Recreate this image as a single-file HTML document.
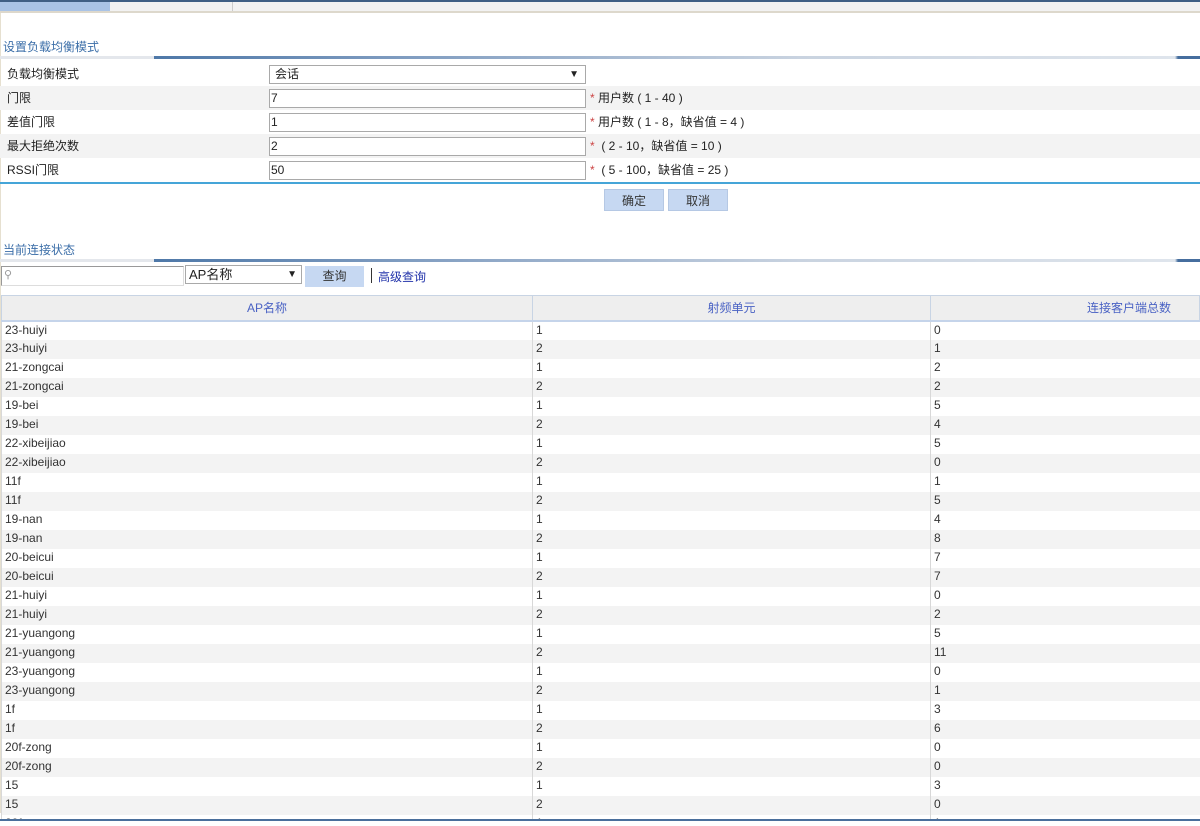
<!DOCTYPE html><html><head><meta charset="utf-8"><style>
*{margin:0;padding:0;box-sizing:border-box}
body{width:1200px;height:826px;overflow:hidden;background:#fff;font-family:"Liberation Sans","Noto Sans CJK SC",sans-serif;font-size:12px;color:#222;position:relative}
.abs{position:absolute}
.title{position:absolute;left:3px;color:#3b6ea8;font-size:12px}
.gl{position:absolute;left:0;width:1200px;height:3px;background:linear-gradient(90deg,#e4e7ec 0,#e4e7ec 154px,#4e78a8 154px,#7f9cc0 400px,#c9d3e0 800px,#dfe5ec 1175px,#466e9e 1178px)}
.row{position:absolute;left:0;width:1200px;height:24px;line-height:24px}
.row.g{background:#f3f3f3}
.row .l{position:absolute;left:7px}
.row .in{position:absolute;left:269px;top:3px;width:317px;height:19px;border:1px solid #a9a9a9;background:#fff;line-height:17px;padding-left:1px}
.row .h{position:absolute;left:590px}
.row .h b{color:#c44;font-weight:normal}
.btn{position:absolute;top:189px;width:60px;height:22px;background:#c6d8f2;color:#333;text-align:center;line-height:22px;border:1px solid #b5c8e4}
.tw{position:absolute;left:1px;top:295px;width:1199px;height:524px;overflow:hidden}
table{border-collapse:collapse;width:1199px}
td{height:19px;line-height:17px;padding-left:3px;border-left:1px solid #d8d8d8;color:#333;white-space:nowrap;vertical-align:top}
tr:nth-child(odd) td{background:#f3f3f3}
th{height:25px;line-height:22px;background:#eee;color:#4a62c4;font-weight:normal;border:1px solid #c8d4e4;border-bottom:2px solid #c5d4ea;padding:0}
</style></head><body>
<div class="abs" style="left:0;top:0;width:1200px;height:2px;background:#3f5f85"></div>
<div class="abs" style="left:0;top:2px;width:1200px;height:9px;background:#f2f2f2"></div>
<div class="abs" style="left:0;top:2px;width:110px;height:9px;background:#a9c3e6"></div>
<div class="abs" style="left:232px;top:2px;width:1px;height:9px;background:#ccc"></div>
<div class="abs" style="left:0;top:11px;width:1200px;height:2px;background:#ddd8cc"></div>
<div class="abs" style="left:0;top:13px;width:1px;height:800px;background:#e6e0d0"></div>

<div class="title" style="top:38px">设置负载均衡模式</div>
<div class="gl" style="top:56px"></div>
<div class="row" style="top:62px"><span class="l">负载均衡模式</span><div class="in" style="padding-left:5px">会话<span style="position:absolute;right:6px;font-size:10px">▼</span></div></div>
<div class="row g" style="top:86px"><span class="l">门限</span><div class="in">7</div><span class="h"><b>*</b> 用户数 ( 1 - 40 )</span></div>
<div class="row" style="top:110px"><span class="l">差值门限</span><div class="in">1</div><span class="h"><b>*</b> 用户数 ( 1 - 8，缺省值 = 4 )</span></div>
<div class="row g" style="top:134px"><span class="l">最大拒绝次数</span><div class="in">2</div><span class="h"><b>*</b> &nbsp;( 2 - 10，缺省值 = 10 )</span></div>
<div class="row" style="top:158px"><span class="l">RSSI门限</span><div class="in">50</div><span class="h"><b>*</b> &nbsp;( 5 - 100，缺省值 = 25 )</span></div>
<div class="abs" style="left:0;top:182px;width:1200px;height:2px;background:#45a5d8"></div>
<div class="btn" style="left:604px">确定</div>
<div class="btn" style="left:668px">取消</div>

<div class="title" style="top:241px">当前连接状态</div>
<div class="gl" style="top:259px"></div>
<div class="abs" style="left:1px;top:266px;width:183px;height:20px;border:1px solid #999;border-right-color:#ddd;border-bottom-color:#ddd;background:#fff"><span style="position:absolute;left:2px;top:1px;color:#999;font-size:11px">⚲</span></div>
<div class="abs" style="left:185px;top:265px;width:117px;height:19px;border:1px solid #a9a9a9;line-height:17px;padding-left:3px;font-size:13px">AP名称<span style="position:absolute;right:4px;font-size:10px">▼</span></div>
<div class="abs" style="left:305px;top:266px;width:59px;height:21px;background:#c6d8f2;text-align:center;line-height:21px;color:#333">查询</div>
<div class="abs" style="left:371px;top:268px;width:1px;height:15px;background:#333"></div>
<div class="abs" style="left:378px;top:268px;color:#2233aa">高级查询</div>

<div class="tw"><table>
<tr><th style="width:531px">AP名称</th><th style="width:398px">射频单元</th><th style="text-align:right;padding-right:28px">连接客户端总数</th></tr>
<tr><td>23-huiyi</td><td>1</td><td>0</td></tr>
<tr><td>23-huiyi</td><td>2</td><td>1</td></tr>
<tr><td>21-zongcai</td><td>1</td><td>2</td></tr>
<tr><td>21-zongcai</td><td>2</td><td>2</td></tr>
<tr><td>19-bei</td><td>1</td><td>5</td></tr>
<tr><td>19-bei</td><td>2</td><td>4</td></tr>
<tr><td>22-xibeijiao</td><td>1</td><td>5</td></tr>
<tr><td>22-xibeijiao</td><td>2</td><td>0</td></tr>
<tr><td>11f</td><td>1</td><td>1</td></tr>
<tr><td>11f</td><td>2</td><td>5</td></tr>
<tr><td>19-nan</td><td>1</td><td>4</td></tr>
<tr><td>19-nan</td><td>2</td><td>8</td></tr>
<tr><td>20-beicui</td><td>1</td><td>7</td></tr>
<tr><td>20-beicui</td><td>2</td><td>7</td></tr>
<tr><td>21-huiyi</td><td>1</td><td>0</td></tr>
<tr><td>21-huiyi</td><td>2</td><td>2</td></tr>
<tr><td>21-yuangong</td><td>1</td><td>5</td></tr>
<tr><td>21-yuangong</td><td>2</td><td>11</td></tr>
<tr><td>23-yuangong</td><td>1</td><td>0</td></tr>
<tr><td>23-yuangong</td><td>2</td><td>1</td></tr>
<tr><td>1f</td><td>1</td><td>3</td></tr>
<tr><td>1f</td><td>2</td><td>6</td></tr>
<tr><td>20f-zong</td><td>1</td><td>0</td></tr>
<tr><td>20f-zong</td><td>2</td><td>0</td></tr>
<tr><td>15</td><td>1</td><td>3</td></tr>
<tr><td>15</td><td>2</td><td>0</td></tr>
<tr><td>20f</td><td>1</td><td>1</td></tr>
</table></div>
<div class="abs" style="left:0;top:819px;width:1200px;height:2px;background:#4a6f9c"></div>
<div class="abs" style="left:0;top:821px;width:1200px;height:5px;background:#fff"></div>
</body></html>
